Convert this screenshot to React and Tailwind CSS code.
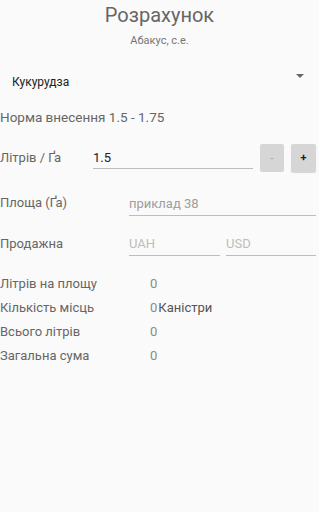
import React from "react";

export default function App() {
  const font = { fontFamily: "Roboto, 'Noto Sans', sans-serif" };
  return (
    <div className="w-[319px] h-[512px] bg-[#fafafa] overflow-hidden" style={font}>
      <div className="flex flex-col items-center pt-[3px]">
        <div className="text-[20px] leading-[24px] text-[#666666]">Розрахунок</div>
        <div className="text-[11px] leading-[12px] text-[#757575] mt-[8px]">Абакус, с.е.</div>
      </div>

      <div className="flex items-center justify-between pl-[12px] pr-[15px] mt-[23px] h-[24px]">
        <span className="text-[12px] text-[#212121]">Кукурудза</span>
        <svg width="8" height="4" viewBox="0 0 8 4" className="mt-[-12px]">
          <path d="M0 0 L8 0 L4 4 Z" fill="#666666" />
        </svg>
      </div>

      <div className="mt-[15px] text-[13.5px] leading-[16px] text-[#666666]">Норма внесення 1.5 - 1.75</div>

      <div className="flex items-center mt-[19px] h-[28px] pr-[3px]">
        <span className="w-[93px] text-[13px] text-[#666666]">Літрів / Ґа</span>
        <div className="w-[160px] h-[22px] border-b border-[#bdbdbd] text-[13px] text-[#212121] leading-[22px]">1.5</div>
        <div className="ml-[7px] w-[24px] h-[28px] bg-[#d6d6d6] rounded-[2px] flex items-center justify-center text-[10px] text-[#9e9e9e]">-</div>
        <div className="ml-[7px] w-[25px] h-[28px] bg-[#d6d6d6] rounded-[2px] shadow-[0_1px_1px_rgba(0,0,0,0.15)] flex items-center justify-center text-[11px] font-bold text-[#212121]">+</div>
      </div>

      <div className="flex items-end mt-[22px] h-[22px] pr-[3px]">
        <span className="w-[129px] text-[13px] leading-[20px] text-[#666666] pb-[3px]">Площа (Ґа)</span>
        <div className="flex-1 h-[22px] border-b border-[#bdbdbd] text-[13px] text-[#9e9e9e] leading-[20px]">приклад 38</div>
      </div>

      <div className="flex items-end mt-[18px] h-[22px] pr-[3px]">
        <span className="w-[129px] text-[13px] leading-[20px] text-[#666666] pb-[2px]">Продажна</span>
        <div className="w-[91px] h-[22px] border-b border-[#bdbdbd] text-[13px] text-[#bdbdbd] leading-[20px]">UAH</div>
        <div className="ml-[6px] flex-1 h-[22px] border-b border-[#bdbdbd] text-[13px] text-[#bdbdbd] leading-[20px]">USD</div>
      </div>

      <div className="mt-[16px] flex flex-col text-[13px] leading-[24px] text-[#666666]">
        {[
          ["Літрів на площу", "0", ""],
          ["Кількість місць", "0", "Каністри"],
          ["Всього літрів", "0", ""],
          ["Загальна сума", "0", ""],
        ].map(([l, v, u]) => (
          <div key={l} className="flex">
            <span className="w-[150px]">{l}</span>
            <span className="text-[#8a8a8a]">{v}</span>
            {u && <span className="ml-[1px] text-[#555555]">{u}</span>}
          </div>
        ))}
      </div>
    </div>
  );
}
